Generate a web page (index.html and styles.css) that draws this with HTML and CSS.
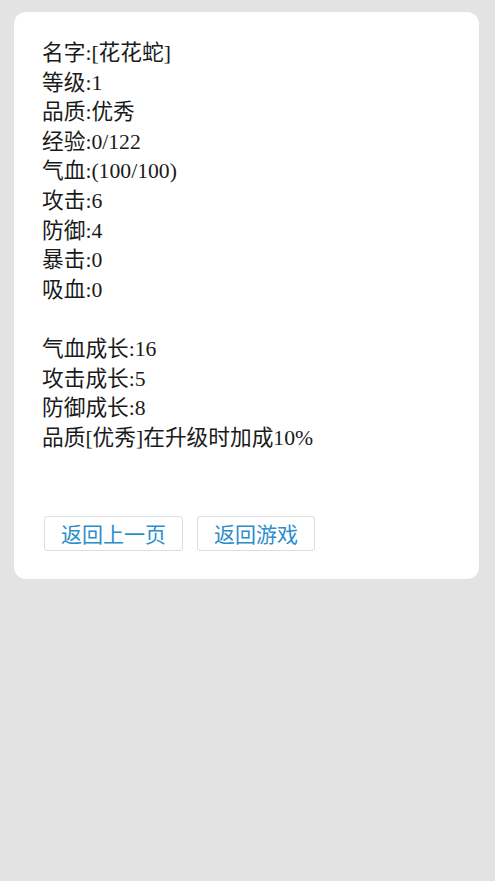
FILE: index.html
```html
<!DOCTYPE html>
<html lang="zh-CN">
<head>
    <meta charset="UTF-8">
    <meta name="viewport" content="width=device-width, initial-scale=1.0">
    <title>宠物信息</title>
    <link rel="stylesheet" href="styles.css">
</head>
<body>
    <div class="card">
        <div class="info">
            <div>名字:[花花蛇]</div>
            <div>等级:1</div>
            <div>品质:优秀</div>
            <div>经验:0/122</div>
            <div>气血:(100/100)</div>
            <div>攻击:6</div>
            <div>防御:4</div>
            <div>暴击:0</div>
            <div>吸血:0</div>
            <div class="blank"></div>
            <div>气血成长:16</div>
            <div>攻击成长:5</div>
            <div>防御成长:8</div>
            <div>品质[优秀]在升级时加成10%</div>
        </div>
        <div class="actions">
            <button>返回上一页</button>
            <button>返回游戏</button>
        </div>
    </div>
</body>
</html>
```

FILE: styles.css
```css
body {
    margin: 0;
    padding: 12px 16px 12px 14px;
    background: #e3e3e3;
    min-height: 881px;
    box-sizing: border-box;
}
.card {
    background: #fff;
    border-radius: 12px;
    padding: 27px 28px 28px;
}
.info {
    font-family: "Liberation Serif", "Noto Sans CJK SC", serif;
    font-size: 21.7px;
    line-height: 29.6px;
    color: #1a1a1a;
}
.info .blank {
    height: 29.6px;
}
.actions {
    display: flex;
    gap: 14px;
    margin-top: 63px;
    padding-left: 2px;
}
button {
    font-family: "Noto Sans CJK SC", sans-serif;
    font-size: 21px;
    line-height: 33px;
    color: #2b8dcc;
    background: #fff;
    border: 1px solid #dddddd;
    border-radius: 3px;
    padding: 0 16px;
}
```
